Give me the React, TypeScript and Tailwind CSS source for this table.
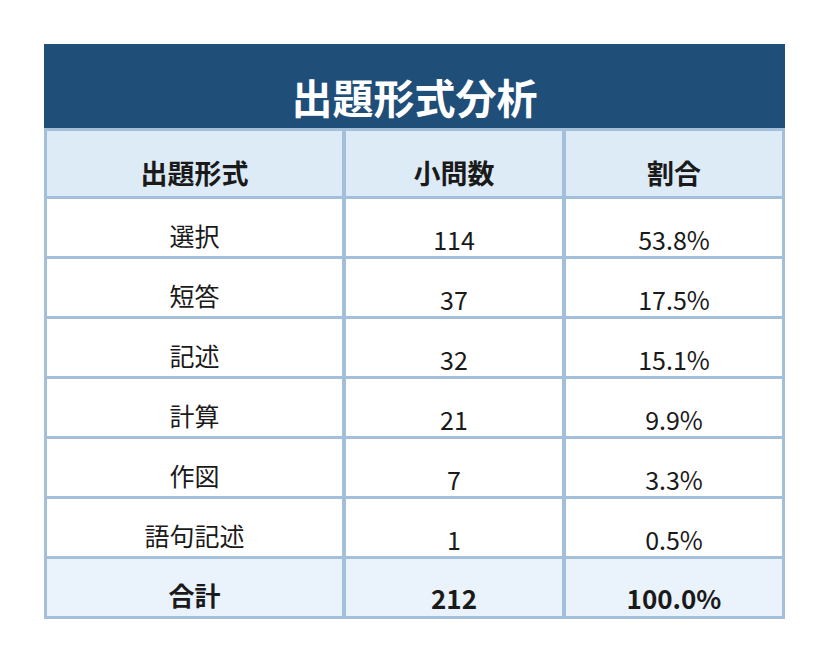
import React from "react";

const rows: [string, string, string][] = [
  ["選択", "114", "53.8%"],
  ["短答", "37", "17.5%"],
  ["記述", "32", "15.1%"],
  ["計算", "21", "9.9%"],
  ["作図", "7", "3.3%"],
  ["語句記述", "1", "0.5%"],
];

const font = { fontFamily: '"Noto Sans CJK JP", "Noto Sans", sans-serif' };

export default function App() {
  return (
    <div className="w-[828px] h-[662px] bg-white pt-[44px] pl-[44px]" style={font}>
      <div className="w-[741px]">
        <div className="h-[84px] bg-[#1f4e79] flex items-end justify-center pb-[11px]">
          <span className="text-white font-bold text-[41px] leading-none">出題形式分析</span>
        </div>
        <div className="bg-[#a3bfd9] p-[3px] grid grid-cols-[295px_216px_216px] gap-x-[4px] gap-y-[3px] text-[#1a1a1a]">
          {["出題形式", "小問数", "割合"].map((h) => (
            <div key={h} className="h-[65px] bg-[#ddebf7] flex items-end justify-center pb-[10px]">
              <span className="font-bold text-[27px] leading-none">{h}</span>
            </div>
          ))}
          {rows.map((r) => (
            <React.Fragment key={r[0]}>
              <div className="h-[57px] bg-white flex items-end justify-center pb-[8px]">
                <span className="text-[25px] leading-none">{r[0]}</span>
              </div>
              <div className="h-[57px] bg-white flex items-end justify-center pb-[4px]">
                <span className="text-[25px] leading-none">{r[1]}</span>
              </div>
              <div className="h-[57px] bg-white flex items-end justify-center pb-[4px]">
                <span className="text-[25px] leading-none">{r[2]}</span>
              </div>
            </React.Fragment>
          ))}
          <div className="h-[57px] bg-[#eaf3fc] flex items-end justify-center pb-[8px]">
            <span className="font-bold text-[26px] leading-none">合計</span>
          </div>
          <div className="h-[57px] bg-[#eaf3fc] flex items-end justify-center pb-[5px]">
            <span className="font-bold text-[26px] leading-none">212</span>
          </div>
          <div className="h-[57px] bg-[#eaf3fc] flex items-end justify-center pb-[5px]">
            <span className="font-bold text-[26px] leading-none">100.0%</span>
          </div>
        </div>
      </div>
    </div>
  );
}
